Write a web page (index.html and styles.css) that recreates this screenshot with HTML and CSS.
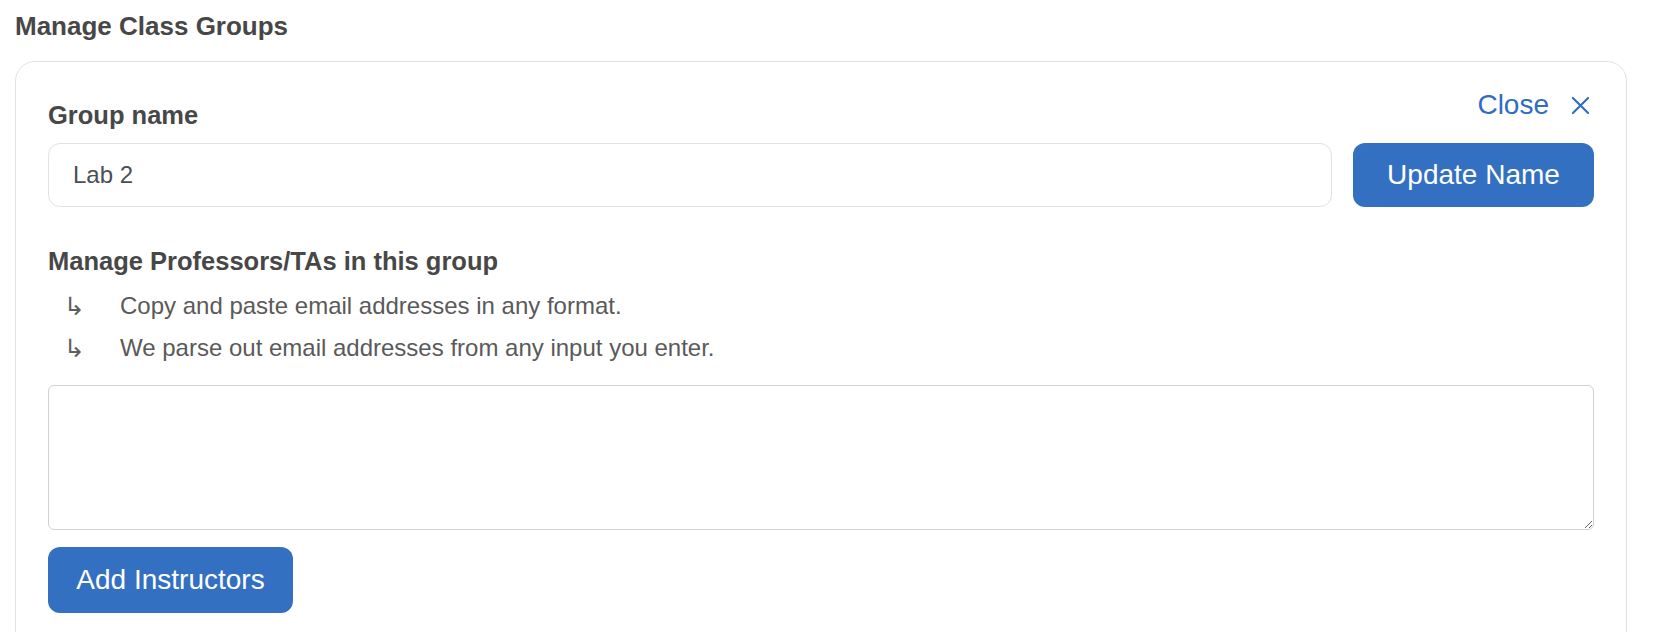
FILE: index.html
```html
<!DOCTYPE html>
<html lang="en">
<head>
<meta charset="utf-8">
<title>Manage Class Groups</title>
<link rel="stylesheet" href="styles.css">
</head>
<body>
<main class="page">
  <h1 class="page-title">Manage Class Groups</h1>
  <section class="card">
    <a class="close-link" href="#">Close
      <svg class="close-icon" viewBox="0 0 20 20" width="19" height="19" aria-hidden="true"><path d="M2 2 L18 18 M18 2 L2 18" stroke="currentColor" stroke-width="2.2" fill="none" stroke-linecap="round"/></svg>
    </a>
    <label class="field-label" for="group-name">Group name</label>
    <div class="name-row">
      <input class="text-input" id="group-name" type="text" value="Lab 2">
      <button class="btn btn-update" type="button">Update Name</button>
    </div>
    <h2 class="section-title">Manage Professors/TAs in this group</h2>
    <ul class="hints">
      <li class="hint"><span class="hint-arrow">↳</span><span class="hint-text">Copy and paste email addresses in any format.</span></li>
      <li class="hint"><span class="hint-arrow">↳</span><span class="hint-text">We parse out email addresses from any input you enter.</span></li>
    </ul>
    <textarea class="emails"></textarea>
    <button class="btn btn-add" type="button">Add Instructors</button>
  </section>
</main>
</body>
</html>
```
FILE: styles.css
```css
* { box-sizing: border-box; }
html, body { margin: 0; padding: 0; background: #ffffff; }
body {
  font-family: "Liberation Sans", Helvetica, Arial, sans-serif;
  color: #464646;
  overflow: hidden;
}
.page {
  padding: 12px 37px 0 15px;
}
.page-title {
  margin: 0 0 21px 0;
  font-size: 26px;
  line-height: 28px;
  font-weight: 700;
  color: #474747;
}
.card {
  position: relative;
  border: 1.5px solid #dfe2e6;
  border-radius: 20px;
  padding: 38px 32px 40px 32px;
  min-height: 600px;
}
.close-link {
  position: absolute;
  top: 27px;
  right: 36px;
  display: flex;
  align-items: center;
  gap: 22px;
  font-size: 28px;
  line-height: 32px;
  color: #2f6dc0;
  text-decoration: none;
}
.close-icon { display: block; color: #2f6dc0; }
.field-label {
  display: block;
  margin: 0 0 13px 0;
  font-size: 25.5px;
  line-height: 30px;
  font-weight: 700;
  color: #474747;
}
.name-row {
  display: flex;
  gap: 21px;
}
.text-input {
  flex: 1;
  height: 64px;
  border: 1.5px solid #dfe2e6;
  border-radius: 12px;
  padding: 0 24px;
  font-family: inherit;
  font-size: 24px;
  color: #4a4f55;
  background: #fff;
  outline: none;
}
.btn {
  height: 64px;
  border: none;
  border-radius: 12px;
  background: #3470c1;
  color: #ffffff;
  font-family: inherit;
  font-size: 28px;
  cursor: pointer;
  padding: 0;
}
.btn-update { width: 241px; flex-shrink: 0; }
.btn-add { width: 245px; height: 66px; display: block; }
.section-title {
  margin: 39px 0 9px 0;
  font-size: 25.5px;
  line-height: 30px;
  font-weight: 700;
  color: #474747;
}
.hints {
  list-style: none;
  margin: 0 0 16px 0;
  padding: 0;
}
.hint {
  display: flex;
  align-items: center;
  height: 42px;
  font-size: 24px;
  line-height: 42px;
  color: #5a5a5a;
}
.hint-arrow {
  flex: 0 0 72px;
  padding-left: 16px;
  font-family: "DejaVu Sans", sans-serif;
  font-size: 25px;
  line-height: 1;
  color: #5e5e5e;
}
.hint-text { line-height: 42px; }
.emails {
  display: block;
  width: 100%;
  height: 145px;
  border: 1.5px solid #ced2d7;
  border-radius: 6px;
  margin: 0 0 17px 0;
  font-family: inherit;
  font-size: 24px;
  resize: vertical;
  outline: none;
}
```
